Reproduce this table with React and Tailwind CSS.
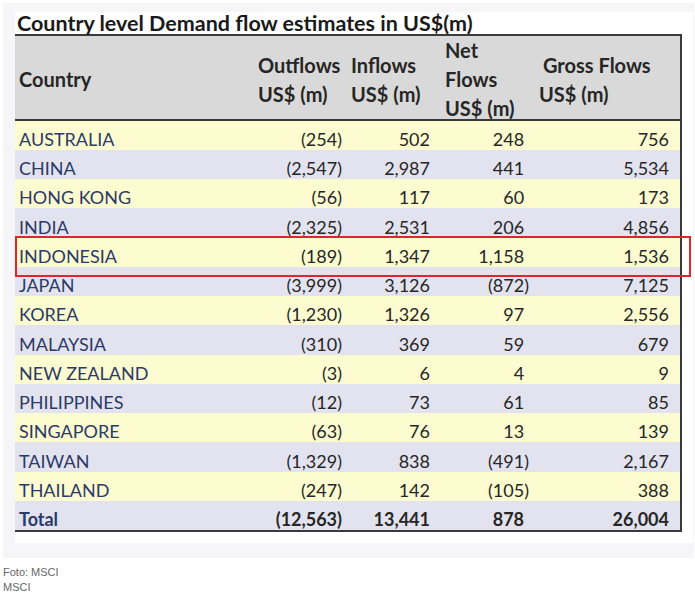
import React from "react";

const rows = [
  ["AUSTRALIA", "(254)", "502", "248", "756"],
  ["CHINA", "(2,547)", "2,987", "441", "5,534"],
  ["HONG KONG", "(56)", "117", "60", "173"],
  ["INDIA", "(2,325)", "2,531", "206", "4,856"],
  ["INDONESIA", "(189)", "1,347", "1,158", "1,536"],
  ["JAPAN", "(3,999)", "3,126", "(872)", "7,125"],
  ["KOREA", "(1,230)", "1,326", "97", "2,556"],
  ["MALAYSIA", "(310)", "369", "59", "679"],
  ["NEW ZEALAND", "(3)", "6", "4", "9"],
  ["PHILIPPINES", "(12)", "73", "61", "85"],
  ["SINGAPORE", "(63)", "76", "13", "139"],
  ["TAIWAN", "(1,329)", "838", "(491)", "2,167"],
  ["THAILAND", "(247)", "142", "(105)", "388"],
];

function Net({ v }) {
  const neg = v.startsWith("(");
  return (
    <span>
      {v}
      {!neg && <span className="invisible">)</span>}
    </span>
  );
}

function Row({ r, i, total }) {
  const bg = i % 2 === 0 ? "bg-[#fdfcd0]" : "bg-[#e3e3ef]";
  const cell = "flex items-end h-full pb-[1px] leading-[20px]";
  return (
    <div
      className={`grid grid-cols-[240px_91px_90px_100px_144px] h-[29.25px] ${bg} ${
        total ? "font-bold" : ""
      }`}
    >
      <div className={`${cell} pl-[4px] text-[#2b3a67]`}>{r[0]}</div>
      <div className={`${cell} justify-end pr-[4px] text-[#262626]`}>{r[1]}</div>
      <div className={`${cell} justify-end pr-[6px] text-[#262626]`}>{r[2]}</div>
      <div className={`${cell} justify-end pr-[7px] text-[#262626]`}>
        <Net v={r[3]} />
      </div>
      <div className={`${cell} justify-end pr-[11px] text-[#262626]`}>{r[4]}</div>
    </div>
  );
}

export default function App() {
  return (
    <div className="w-[695px] h-[602px] bg-white overflow-hidden">
      <div className="ml-[3px] mt-[3px] w-[691px] h-[555px] bg-[#f6f6f9] pl-[12px] pt-[9px]">
        <div className="relative w-[678px] h-[531px] bg-white font-['Lato',sans-serif]">
          <div className="h-[22px] pl-[2px] text-[21.5px] leading-[22px] font-bold text-[#1a1a1a] whitespace-nowrap">
            Country level Demand flow estimates in US$(m)
          </div>
          <div className="w-[667px] border-t-2 border-b-2 border-r-2 border-[#3a3a3a] text-[18px]">
            <div className="grid grid-cols-[240px_91px_90px_100px_144px] h-[84.5px] bg-[#d9d9d9] border-b-2 border-[#3a3a3a] font-bold text-[20px] text-[#262626] leading-[29px] whitespace-nowrap">
              <div className="flex items-center pb-[4px] pl-[4px]">Country</div>
              <div className="flex flex-col justify-center pb-[4px] pl-[3px]">
                <span>Outflows</span>
                <span>US$ (m)</span>
              </div>
              <div className="flex flex-col justify-center pb-[4px] pl-[5px]">
                <span>Inflows</span>
                <span>US$ (m)</span>
              </div>
              <div className="flex flex-col justify-center pb-[4px] pl-[9px]">
                <span>Net</span>
                <span>Flows</span>
                <span>US$ (m)</span>
              </div>
              <div className="flex flex-col justify-center pb-[4px] pl-[3px]">
                <span className="pl-[4px]">Gross Flows</span>
                <span>US$ (m)</span>
              </div>
            </div>
            {rows.map((r, i) => (
              <Row key={r[0]} r={r} i={i} />
            ))}
            <Row r={["Total", "(12,563)", "13,441", "878", "26,004"]} i={1} total />
          </div>
          <div className="absolute left-0 top-[224px] w-[676px] h-[41px] border-2 border-[#e0262b]" />
        </div>
      </div>
      <div className="mt-[6.5px] pl-[3px] font-['Liberation_Sans',Arial,sans-serif] text-[11px] leading-[15px] text-[#666]">
        <div>Foto: MSCI</div>
        <div>MSCI</div>
      </div>
    </div>
  );
}
